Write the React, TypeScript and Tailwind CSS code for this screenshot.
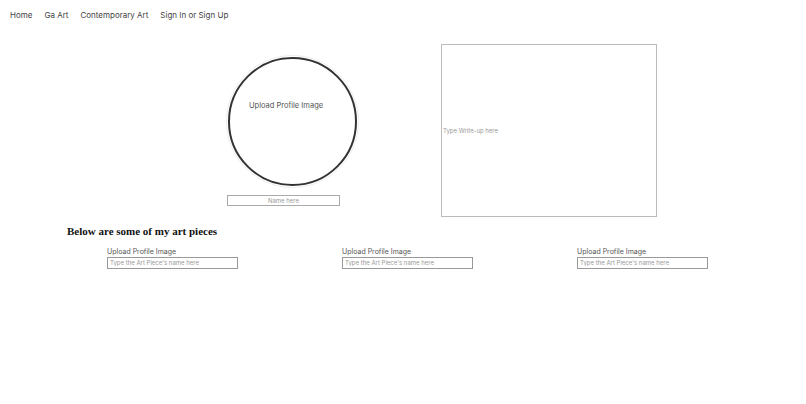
import React from "react";

const navLinks = ["Home", "Ga Art", "Contemporary Art", "Sign In or Sign Up"];

function ArtPiece() {
  return (
    <div className="flex w-[131px] flex-col">
      <span className="text-[7px] leading-[10px] text-[#555]">Upload Profile Image</span>
      <input
        className="h-[12px] w-[131px] border border-[#999] px-[2px] text-[6px] text-[#444] placeholder:text-[#999] focus:outline-none"
        placeholder="Type the Art Piece's name here"
      />
    </div>
  );
}

export default function App() {
  return (
    <div className="min-h-[404px] w-[806px] bg-white font-['Inter',sans-serif] text-[#333]">
      <nav className="flex h-[30px] items-center gap-[12px] pl-[10px]">
        {navLinks.map((l) => (
          <a key={l} href="#" className="text-[8px] text-[#444]">
            {l}
          </a>
        ))}
      </nav>

      <div className="mt-[14px] flex items-start">
        <div className="mt-[11px] ml-[226px] flex flex-col items-start">
          <div className="h-[133px] w-[133px] rounded-full border border-[#eee] p-[1px]">
            <div className="flex h-full w-full flex-col items-start rounded-full border-2 border-[#333] pl-[19px]">
              <span className="mt-[41px] text-[7.5px] text-[#555]">Upload Profile Image</span>
            </div>
          </div>
          <input
            className="mt-[7px] ml-[1px] h-[11px] w-[113px] border border-[#aaa] text-center text-[6px] placeholder:text-[#999] focus:outline-none"
            placeholder="Name here"
          />
        </div>

        <div className="ml-[82px] flex h-[173px] w-[216px] items-center border border-[#bbb]">
          <span className="pl-[1px] text-[6px] text-[#999]">Type Write-up here</span>
        </div>
      </div>

      <h2 className="mt-[6px] pl-[67px] font-['Liberation_Serif',serif] text-[11px] font-bold text-[#111]">
        Below are some of my art pieces
      </h2>

      <div className="mt-[7px] flex gap-[104px] pl-[107px]">
        <ArtPiece />
        <ArtPiece />
        <ArtPiece />
      </div>
    </div>
  );
}
